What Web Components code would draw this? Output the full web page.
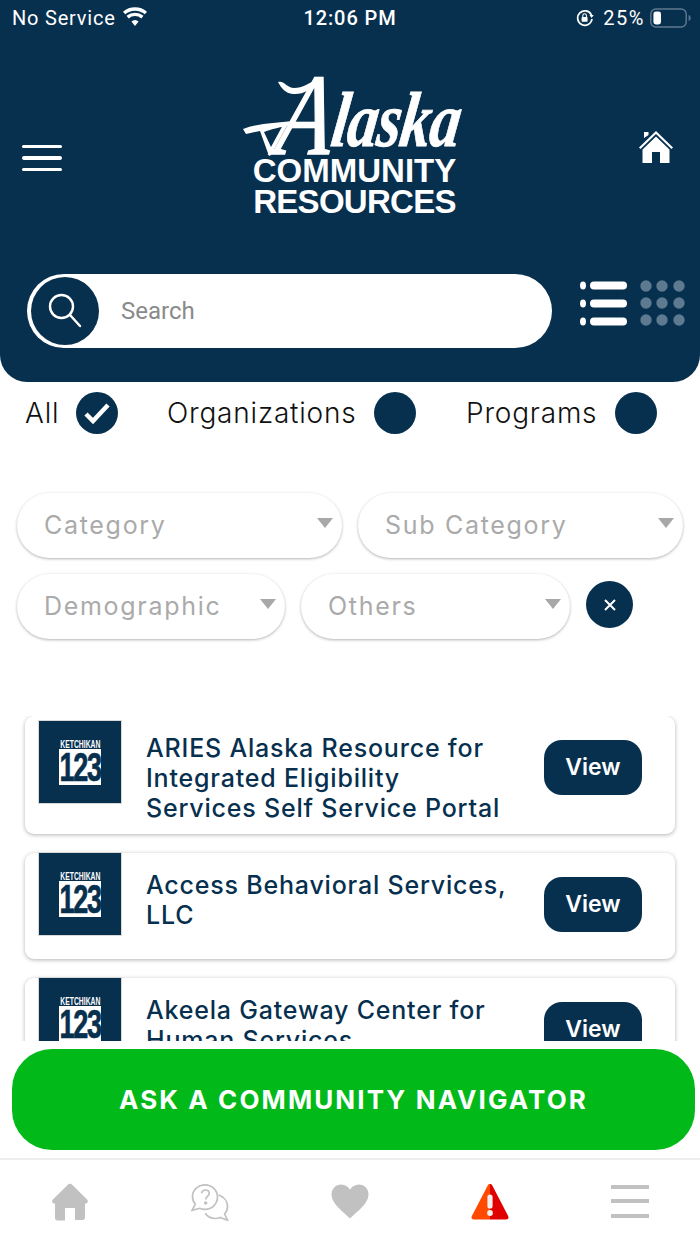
<!DOCTYPE html>
<html>
<head>
<meta charset="utf-8">
<title>Alaska Community Resources</title>
<style>
  html, body { margin: 0; padding: 0; background: #fff; }
  body { font-family: "Inter", "Liberation Sans", sans-serif; }
</style>
</head>
<body>
<app-shell>
  <app-header></app-header>
  <type-filter></type-filter>
  <filter-panel>
    <filter-select style="width:325px">Category</filter-select>
    <filter-select style="width:325px">Sub Category</filter-select>
    <filter-select style="width:268px">Demographic</filter-select>
    <filter-select style="width:269px">Others</filter-select>
    <clear-button></clear-button>
  </filter-panel>
  <result-list>
    <result-card logo-top="4" pad-top="17" style="height:118px">ARIES Alaska Resource for Integrated Eligibility Services Self Service Portal</result-card>
    <result-card logo-top="-1" pad-top="17" style="height:106px">Access Behavioral Services, LLC</result-card>
    <result-card logo-top="-1" pad-top="17" style="height:106px">Akeela Gateway Center for Human Services</result-card>
  </result-list>
  <ask-button>ASK A COMMUNITY NAVIGATOR</ask-button>
  <tab-bar></tab-bar>
</app-shell>

<script>
const NAVY = '#07304f';

class AppShell extends HTMLElement {
  constructor() {
    super();
    this.attachShadow({ mode: 'open' }).innerHTML = `
      <style>
        :host { display: flex; flex-direction: column; width: 700px; height: 1244px; overflow: hidden; background: #fff; position: relative; }
      </style>
      <slot></slot>`;
  }
}

class AppHeader extends HTMLElement {
  constructor() {
    super();
    this.attachShadow({ mode: 'open' }).innerHTML = `
      <style>
        :host { display: block; height: 382px; background: ${NAVY}; border-radius: 0 0 27px 27px; color: #fff; flex: none; box-sizing: border-box; }
        .status { height: 36px; display: grid; grid-template-columns: 1fr auto 1fr; align-items: center; padding: 0 8px 0 12px; font: 400 20px "Roboto", "Liberation Sans", sans-serif; }
        .left, .right { display: flex; align-items: center; }
        .left { letter-spacing: .8px; }
        .right { justify-content: flex-end; }
        .right span { letter-spacing: 1.500px; }
        .left svg { margin-left: 6px; margin-top: -3px; }
        .time { font-weight: 500; letter-spacing: .9px; margin-left: -4px; }
        .brand { height: 238px; display: grid; grid-template-columns: 1fr auto 1fr; align-items: start; padding: 0 26px 0 22px; }
        .burger { margin-top: 109px; width: 40px; height: 26px; display: flex; flex-direction: column; justify-content: space-between; }
        .burger i { display: block; height: 3.4px; border-radius: 2px; background: #fff; }
        .home { justify-self: end; margin-top: 93px; }
        .logo { position: relative; width: 222px; margin: 41px 0 0 12px; text-align: center; font-family: "Liberation Sans", sans-serif; font-weight: 700; }
        .script { height: 78px; white-space: nowrap; text-align: left; font: italic 700 78px/86px "Liberation Serif", serif; letter-spacing: -1px; transform: scaleX(.78) skewX(-10deg); transform-origin: 0 100%; padding-left: 39px; box-sizing: border-box; -webkit-text-stroke: .8px #fff; }
        .script span { font-size: 116px; line-height: 0; font-weight: 400; vertical-align: -8px; -webkit-text-stroke: 1.400px #fff; }
        .swash { position: absolute; left: 0; top: 0; }
        .line { padding-left: 1px; font-size: 33px; line-height: 31px; }
        .line.tight { letter-spacing: -.7px; }
        .search-row { display: flex; padding: 0 14px 0 27px; align-items: flex-start; }
        .pill { width: 526px; height: 74px; border-radius: 37px; background: #fff; display: flex; align-items: center; box-sizing: border-box; padding-left: 4px; }
        .lens { width: 68px; height: 68px; border-radius: 50%; background: ${NAVY}; display: flex; align-items: center; justify-content: center; flex: none; }
        .placeholder { margin-left: 22px; font: 400 24px "Roboto", "Liberation Sans", sans-serif; color: #8a8a8a; }
        .views { display: flex; margin-left: 28px; margin-top: 5px; gap: 12px; }
      </style>
      <div class="status">
        <div class="left">No Service
          <svg width="26" height="20" viewBox="0 0 26 20"><path d="M13 19l-3.600-4.400a5.400 5.400 0 0 1 7.200 0zM6.700 11.400a9.700 9.700 0 0 1 12.600 0l2.200-2.700a13.300 13.300 0 0 0-17 0zM1 4.700l2.200 2.600a15 15 0 0 1 19.600 0L25 4.700a18.600 18.600 0 0 0-24 0z" fill="#fff"/></svg>
        </div>
        <div class="time">12:06 PM</div>
        <div class="right">
          <svg width="18" height="18" viewBox="0 0 18 18" fill="none" style="margin-right:9px"><path d="M15.400 6A7.200 7.200 0 1 0 16 10" stroke="#fff" stroke-width="1.700"/><path d="M13.500 6h4.200l-2.100 3z" fill="#fff"/><rect x="5.600" y="8" width="6" height="4.800" rx=".8" fill="#fff"/><path d="M6.800 8V6.600a1.800 1.800 0 0 1 3.600 0V8" stroke="#fff" stroke-width="1.100"/></svg>
          <span>25%</span>
          <svg width="42" height="20" viewBox="0 0 42 20" fill="none" style="margin-left:5px"><rect x=".8" y="1" width="35.400" height="18" rx="5" stroke="#5f7a90" stroke-width="1.400"/><rect x="3.400" y="3.600" width="7.600" height="12.800" rx="2.400" fill="#fff"/><path d="M38.600 7v6c1.400-.4 2-1.600 2-3s-.6-2.600-2-3z" fill="#5f7a90"/></svg>
        </div>
      </div>
      <div class="brand">
        <div class="burger"><i></i><i></i><i></i></div>
        <div class="logo">
          <div class="script"><span>A</span>laska</div>
          <svg class="swash" width="222" height="90" viewBox="0 0 222 90"><path d="M0 52C16 46 32 46 50 44l-1 4C38 50 28 52 21 55l7 15 13-24 4 1-17 31-2 1-9-25-14 3z" fill="#fff"/><path d="M35 5c6-2 9 6 16 6 9 0 15-5 24-9l1 3C68 12 60 18 50 17c-8-1-11-5-15-12z" fill="#fff"/></svg>
          <div class="line">COMMUNITY</div>
          <div class="line tight">RESOURCES</div>
        </div>
        <svg class="home" width="36" height="36" viewBox="0 0 36 36"><path d="M1 18.500 18 2l17 16.500-1.500 1.500L18 5 2.500 20z M6 9V3h4.500v3z" fill="#fff"/><path d="M4.500 20.500 18 7.500l13.500 13V34H22V23h-8v11H4.500z" fill="#fff"/></svg>
      </div>
      <div class="search-row">
        <div class="pill">
          <div class="lens"><svg width="36" height="38" viewBox="0 0 36 38" fill="none" stroke="#fff" stroke-width="2.400" stroke-linecap="round"><circle cx="14.500" cy="14.500" r="11.500"/><path d="M23 23l10 11"/></svg></div>
          <span class="placeholder">Search</span>
        </div>
        <div class="views">
          <svg width="48" height="48" viewBox="0 0 48 48" fill="#fff"><ellipse cx="3" cy="6.500" rx="3" ry="4"/><rect x="10" y="2.500" width="37" height="8" rx="4"/><ellipse cx="3" cy="24.500" rx="3" ry="4"/><rect x="10" y="20.500" width="37" height="8" rx="4"/><ellipse cx="3" cy="42.500" rx="3" ry="4"/><rect x="10" y="38.500" width="37" height="8" rx="4"/></svg>
          <svg width="46" height="48" viewBox="0 0 46 48" fill="#5d7a91"><circle cx="6" cy="7" r="5.700"/><circle cx="22" cy="7" r="5.700"/><circle cx="39" cy="7" r="5.700"/><circle cx="6" cy="24" r="5.700"/><circle cx="22" cy="24" r="5.700"/><circle cx="39" cy="24" r="5.700"/><circle cx="6" cy="41" r="5.700"/><circle cx="22" cy="41" r="5.700"/><circle cx="39" cy="41" r="5.700"/></svg>
        </div>
      </div>`;
  }
}

class TypeFilter extends HTMLElement {
  constructor() {
    super();
    this.attachShadow({ mode: 'open' }).innerHTML = `
      <style>
        :host { display: flex; flex: none; height: 111px; box-sizing: border-box; padding: 10px 0 0 25px; font: 300 28px "Inter", "Liberation Sans", sans-serif; letter-spacing: .8px; color: #111; }
        .opt { display: flex; align-items: center; height: 42px; }
        .opt span:first-child { margin-top: -1px; }
        .dot { width: 42px; height: 42px; border-radius: 50%; background: ${NAVY}; display: flex; align-items: center; justify-content: center; }
      </style>
      <div class="opt" style="width:142px"><span>All</span><span class="dot" style="margin-left:17px"><svg width="26" height="22" viewBox="0 0 26 22"><path d="M2 12l7 7L24 3" fill="none" stroke="#fff" stroke-width="4.500"/></svg></span></div>
      <div class="opt" style="width:299px"><span>Organizations</span><span class="dot" style="margin-left:17px"></span></div>
      <div class="opt"><span>Programs</span><span class="dot" style="margin-left:18px"></span></div>`;
  }
}

class FilterPanel extends HTMLElement {
  constructor() {
    super();
    this.attachShadow({ mode: 'open' }).innerHTML = `
      <style>
        :host { display: flex; flex-wrap: wrap; flex: none; gap: 16px; align-content: flex-start; height: 223px; box-sizing: border-box; padding-left: 17px; width: 700px; }
      </style>
      <slot></slot>`;
  }
}

class FilterSelect extends HTMLElement {
  constructor() {
    super();
    this.attachShadow({ mode: 'open' }).innerHTML = `
      <style>
        :host { display: flex; align-items: center; box-sizing: border-box; height: 65px; border-radius: 33px; background: #fff; box-shadow: 0 1px 3px rgba(0,0,0,.3); padding: 0 9px 0 27px; font: 400 25px "Inter", "Liberation Sans", sans-serif; letter-spacing: 1.700px; color: #aaa; }
        .label { flex: 1; white-space: nowrap; margin-top: -2px; }
        .caret { width: 0; height: 0; border: 8.500px solid transparent; border-top: 10px solid #a8a8a8; border-bottom: 0; margin-top: -5px; }
      </style>
      <span class="label"><slot></slot></span><span class="caret"></span>`;
  }
}

class ClearButton extends HTMLElement {
  constructor() {
    super();
    this.attachShadow({ mode: 'open' }).innerHTML = `
      <style>
        :host { display: flex; width: 47px; height: 47px; border-radius: 50%; background: ${NAVY}; align-items: center; justify-content: center; margin-top: 7px; }
      </style>
      <svg width="14" height="14" viewBox="0 0 14 14"><path d="M2 2l10 10M12 2L2 12" stroke="#fff" stroke-width="2"/></svg>`;
  }
}

class ResultList extends HTMLElement {
  constructor() {
    super();
    this.attachShadow({ mode: 'open' }).innerHTML = `
      <style>
        :host { display: flex; flex-direction: column; gap: 19px; flex: none; height: 325px; overflow: hidden; box-sizing: border-box; padding: 0 25px; }
      </style>
      <slot></slot>`;
  }
}

class ResultCard extends HTMLElement {
  constructor() {
    super();
    this.attachShadow({ mode: 'open' }).innerHTML = `
      <style>
        :host { display: flex; flex: none; box-sizing: border-box; background: #fff; border-radius: 9px; box-shadow: 0 1px 4px rgba(0,0,0,.3); padding-left: 13px; align-items: flex-start; }
        .logo { flex: none; box-sizing: border-box; width: 84px; height: 84px; background: ${NAVY}; border: 1px solid #d8d8d8; display: flex; align-items: center; justify-content: center; }
        .mark { width: 42px; height: 45px; display: flex; flex-direction: column; align-items: center; font-family: "Liberation Sans", sans-serif; font-weight: 700; }
        .town { height: 9px; font-size: 11px; line-height: 9px; color: #fff; transform: scaleX(.62); white-space: nowrap; }
        .num { flex: none; width: 42px; height: 36px; background: #fff; color: ${NAVY}; font-size: 41px; line-height: 36px; display: flex; justify-content: center; letter-spacing: -2px; -webkit-text-stroke: .7px ${NAVY}; }
        .num span { display: block; transform: scaleX(.66); }
        .title { flex: none; width: 364px; margin-left: 24px; margin-right: 34px; font: 500 25px/30px "Inter", "Liberation Sans", sans-serif; letter-spacing: .8px; color: ${NAVY}; }
        .view { flex: none; width: 98px; height: 55px; border-radius: 18px; background: ${NAVY}; color: #fff; font: 600 23px/55px "Inter", "Liberation Sans", sans-serif; text-align: center; }
      </style>
      <div class="logo"><div class="mark"><div class="town">KETCHIKAN</div><div class="num"><span>123</span></div></div></div>
      <div class="title"><slot></slot></div>
      <div class="view">View</div>`;
    const top = this.getAttribute('logo-top') || '0';
    const pad = this.getAttribute('pad-top') || '0';
    this.shadowRoot.querySelector('.logo').style.marginTop = top + 'px';
    this.shadowRoot.querySelector('.title').style.marginTop = pad + 'px';
    this.shadowRoot.querySelector('.view').style.marginTop = '24px';
  }
}

class AskButton extends HTMLElement {
  constructor() {
    super();
    this.attachShadow({ mode: 'open' }).innerHTML = `
      <style>
        :host { display: flex; flex: none; align-items: center; justify-content: center; width: 683px; height: 101px; margin: 8px 0 0 12px; border-radius: 40px; background: #02b91a; color: #fff; font: 700 26px "Inter", "Liberation Sans", sans-serif; letter-spacing: 2.100px; }
      </style>
      <slot></slot>`;
  }
}

class TabBar extends HTMLElement {
  constructor() {
    super();
    this.attachShadow({ mode: 'open' }).innerHTML = `
      <style>
        :host { display: grid; grid-template-columns: repeat(5, 1fr); flex: none; height: 86px; margin-top: 8px; border-top: 2px solid #eee; justify-items: center; align-items: start; box-sizing: border-box; width: 700px; }
        svg { margin-top: 23px; }
      </style>
      <svg width="38" height="38" viewBox="0 0 38 38"><path d="M19 .8c1 0 1.800.5 2.400 1.100l14.700 14.500c1.500 1.600.5 4.100-1.600 4.100H34v14c0 1.500-1 2.500-2.500 2.500H24V25h-10v12.500H6.500C5 37.500 4 36.500 4 35V20.500H3.500c-2.100 0-3.100-2.500-1.600-4.100L16.600 1.900C17.200 1.300 18 .8 19 .8z" fill="#c1c1c1"/></svg>
      <svg width="38" height="38" viewBox="0 0 38 38" fill="none" stroke="#c1c1c1" stroke-width="1.700"><path d="M14 1.800C7.400 1.800 1.500 6.900 1.500 13.500c0 3 1 5.700 2.800 7.700L1 27.400l7.700-2.100c1.600.7 3.400 1.100 5.300 1.100 6.700 0 12.500-5.300 12.500-12.300S20.700 1.800 14 1.800z"/><path d="M27.500 12c5.500 1.700 9 6.300 9 11.500 0 3-1.100 5.600-2.900 7.500l2.900 6.200-7.300-2.700c-1.500.7-3.200 1-5 1-4 0-7.800-2-10-5.200"/><path d="M10.500 10.400c.5-2.200 2-3.400 3.900-3.400 2.200 0 3.800 1.500 3.800 3.400 0 2.900-3.500 3-3.500 6"/><circle cx="14.700" cy="20" r=".9" fill="#c1c1c1"/></svg>
      <svg width="38" height="38" viewBox="0 0 38 38"><path d="M19 35.500C12.500 29 .5 20.500.5 11.400.5 5.400 5 1.500 10 1.500c3.900 0 7.200 2.100 9 5.200 1.800-3.100 5.100-5.200 9-5.200 5 0 9.500 3.900 9.500 9.900C37.500 20.500 25.500 29 19 35.500z" fill="#c1c1c1"/></svg>
      <svg width="38" height="38" viewBox="0 0 38 38"><path d="M19 1c-.9 0-1.800.5-2.300 1.400L1 32.800C-.3 35.200 1 36.500 3 36.500h16z" fill="#ff4a00"/><path d="M19 1c.9 0 1.800.5 2.300 1.400L37 32.800c1.300 2.400 0 3.700-2 3.700H19z" fill="#e00000"/><rect x="16.400" y="11.500" width="5.200" height="14" rx="2.600" fill="#f4f0ee"/><circle cx="19" cy="30" r="2.900" fill="#f4f0ee"/></svg>
      <svg width="38" height="38" viewBox="0 0 38 38" fill="#c1c1c1"><rect y="2" width="38" height="4"/><rect y="16" width="38" height="4"/><rect y="31" width="38" height="4"/></svg>`;
  }
}

customElements.define('app-shell', AppShell);
customElements.define('app-header', AppHeader);
customElements.define('type-filter', TypeFilter);
customElements.define('filter-panel', FilterPanel);
customElements.define('filter-select', FilterSelect);
customElements.define('clear-button', ClearButton);
customElements.define('result-list', ResultList);
customElements.define('result-card', ResultCard);
customElements.define('ask-button', AskButton);
customElements.define('tab-bar', TabBar);
</script>
</body>
</html>
